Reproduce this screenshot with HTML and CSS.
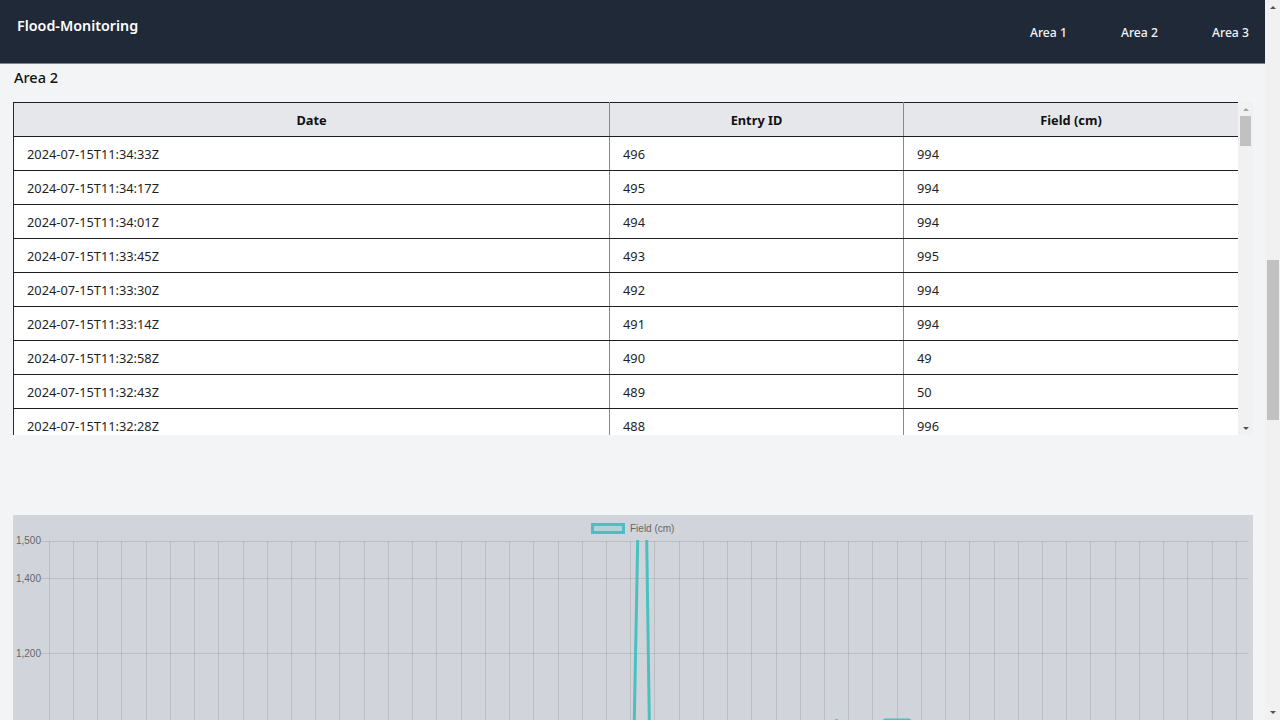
FILE: index.html
```html
<!DOCTYPE html>
<html lang="en">
<head>
<meta charset="utf-8">
<title>Flood-Monitoring</title>
<link rel="stylesheet" href="styles.css">
</head>
<body>
<div class="page">
  <header class="topbar">
    <div class="brand">Flood-Monitoring</div>
    <nav class="nav">
      <a href="#area1">Area 1</a>
      <a href="#area2">Area 2</a>
      <a href="#area3">Area 3</a>
    </nav>
  </header>
  <main class="content">
    <section class="area" id="area2">
      <h2 class="area-title">Area 2</h2>
      <div class="table-wrap">
        <div class="table-scroll">
          <table class="data">
            <colgroup><col class="col-date"><col class="col-id"><col class="col-field"></colgroup>
            <thead><tr><th>Date</th><th>Entry ID</th><th>Field (cm)</th></tr></thead>
            <tbody>
              <tr><td>2024-07-15T11:34:33Z</td><td>496</td><td>994</td></tr>
              <tr><td>2024-07-15T11:34:17Z</td><td>495</td><td>994</td></tr>
              <tr><td>2024-07-15T11:34:01Z</td><td>494</td><td>994</td></tr>
              <tr><td>2024-07-15T11:33:45Z</td><td>493</td><td>995</td></tr>
              <tr><td>2024-07-15T11:33:30Z</td><td>492</td><td>994</td></tr>
              <tr><td>2024-07-15T11:33:14Z</td><td>491</td><td>994</td></tr>
              <tr><td>2024-07-15T11:32:58Z</td><td>490</td><td>49</td></tr>
              <tr><td>2024-07-15T11:32:43Z</td><td>489</td><td>50</td></tr>
              <tr><td>2024-07-15T11:32:28Z</td><td>488</td><td>996</td></tr>
            </tbody>
          </table>
        </div>
        <div class="scrollbar table-bar">
          <span class="sb-btn"><i class="arrow-up dim"></i></span>
          <span class="sb-track"><span class="sb-thumb table-thumb"></span></span>
          <span class="sb-btn"><i class="arrow-down"></i></span>
        </div>
      </div>
      <div class="chart-box">
        <svg class="chart" width="1240" height="620" viewBox="0 0 1240 620" xmlns="http://www.w3.org/2000/svg">
          <defs>
            <clipPath id="plot"><rect x="36" y="25" width="1201" height="565"/></clipPath>
          </defs>
          <g class="legend">
            <rect x="579.5" y="9.5" width="31" height="8" fill="rgba(75,192,192,0.2)" stroke="rgb(75,192,192)" stroke-width="3"/>
            <text x="617" y="17" class="legend-text">Field (cm)</text>
          </g>
          <path class="grid" d="M28 26.5H1235.5M28 63.5H1235.5M28 138.5H1235.5M28 213.5H1235.5M28 288.5H1235.5M28 363.5H1235.5M28 438.5H1235.5M28 513.5H1235.5M28 588.5H1235.5"/>
          <path class="grid" d="M36.5 26V596M60.5 26V596M84.5 26V596M108.5 26V596M133.5 26V596M157.5 26V596M181.5 26V596M205.5 26V596M230.5 26V596M254.5 26V596M278.5 26V596M302.5 26V596M326.5 26V596M351.5 26V596M375.5 26V596M399.5 26V596M423.5 26V596M448.5 26V596M472.5 26V596M496.5 26V596M520.5 26V596M545.5 26V596M569.5 26V596M593.5 26V596M617.5 26V596M641.5 26V596M666.5 26V596M690.5 26V596M714.5 26V596M738.5 26V596M763.5 26V596M787.5 26V596M811.5 26V596M835.5 26V596M859.5 26V596M884.5 26V596M908.5 26V596M932.5 26V596M956.5 26V596M981.5 26V596M1005.5 26V596M1029.5 26V596M1053.5 26V596M1077.5 26V596M1102.5 26V596M1126.5 26V596M1150.5 26V596M1174.5 26V596M1199.5 26V596M1223.5 26V596"/>
          <g class="ticks">
            <text x="28" y="26.5">1,500</text>
            <text x="28" y="64">1,400</text>
            <text x="28" y="139">1,200</text>
          </g>
          <path class="series" clip-path="url(#plot)" d="M36.3 216L605.56 216L617.68 395.6L629.79 -242.5L641.9 590L654.01 216L811.47 216L823.58 205.5L835.69 216L859.92 216L872.03 205L884.14 205L896.25 205L908.36 216L1235.39 216"/>
        </svg>
      </div>
    </section>
  </main>
</div>
<div class="scrollbar page-bar">
  <span class="sb-btn"><i class="arrow-up"></i></span>
  <span class="sb-track"><span class="sb-thumb page-thumb"></span></span>
  <span class="sb-btn"><i class="arrow-down"></i></span>
</div>
</body>
</html>
```
FILE: styles.css
```css
* { box-sizing: border-box; }

html { background: #f3f4f6; }

body {
  margin: 0;
  height: 100vh;
  overflow: hidden;
  display: flex;
  background: #f3f4f6;
  color: #111827;
  font-family: "Noto Sans", "Open Sans", sans-serif;
}

.page {
  flex: 1;
  min-width: 0;
  height: 100%;
  overflow: hidden;
  display: flex;
  flex-direction: column;
}

/* ---------- header ---------- */
.topbar {
  flex: none;
  height: 64px;
  display: flex;
  justify-content: space-between;
  align-items: flex-start;
  padding: 0 16px 0 17px;
  background: #1f2937;
  border-bottom: 1px solid #7b8494;
}

.brand {
  padding-top: 16px;
  font-size: 14.3px;
  line-height: 20px;
  font-weight: 600;
  color: #ffffff;
}

.nav {
  display: flex;
  gap: 54px;
  padding-top: 23px;
}

.nav a {
  color: #f3f4f6;
  text-decoration: none;
  font-size: 12.2px;
  line-height: 20px;
  font-weight: 500;
}

/* ---------- content ---------- */
.content {
  padding: 0 12px 0 13px;
}

.area-title {
  margin: 0 0 12px;
  padding-left: 1px;
  font-size: 14.5px;
  line-height: 26px;
  font-weight: 500;
  color: #111111;
}

.table-wrap {
  height: 333px;
  display: flex;
}

.table-scroll {
  flex: 1;
  min-width: 0;
  overflow: hidden;
}

.data {
  width: 100%;
  border-collapse: collapse;
  table-layout: fixed;
  background: #ffffff;
  font-size: 12.8px;
  color: #1f1f1f;
}

.col-date { width: 596px; }
.col-id { width: 294px; }
.col-field { width: 335px; }

.data th,
.data td {
  height: 34px;
  padding: 0 13px;
  border: 1px solid #8a8a8a;
  border-top-color: #1f1f1f;
  border-bottom-color: #1f1f1f;
  text-align: left;
  white-space: nowrap;
}

.data th {
  background: #e5e7eb;
  font-weight: 700;
  text-align: center;
  color: #111111;
}

.data th:first-child,
.data td:first-child { border-left-color: #2a2a2a; }

.data th:last-child,
.data td:last-child { border-right-color: #1f1f1f; }

/* ---------- scrollbars ---------- */
.scrollbar {
  flex: none;
  width: 15px;
  display: flex;
  flex-direction: column;
  background: #f1f1f1;
}

.sb-btn {
  flex: none;
  height: 15px;
  display: flex;
  align-items: center;
  justify-content: center;
}

.table-bar .sb-btn { height: 14px; }

.sb-track {
  flex: 1;
  display: flex;
  flex-direction: column;
  align-items: center;
}

.sb-thumb {
  display: block;
  width: 11px;
  background: #c1c1c1;
}

.table-thumb { height: 30px; }

.page-thumb {
  margin-top: 245px;
  height: 160px;
  width: 12px;
  margin-left: 1px;
}

.arrow-up,
.arrow-down {
  display: block;
  width: 0;
  height: 0;
  border-left: 3.5px solid transparent;
  border-right: 3.5px solid transparent;
}

.arrow-up { border-bottom: 3.5px solid #505050; }
.arrow-down { border-top: 3.5px solid #505050; }
.arrow-up.dim { border-bottom-color: #a3a3a3; }

/* ---------- chart ---------- */
.chart-box {
  margin-top: 80px;
  height: 620px;
  background: #d1d5db;
  overflow: hidden;
}

.chart { display: block; }

.chart .grid {
  fill: none;
  stroke: rgba(0, 0, 0, 0.1);
  stroke-width: 1;
}

.chart .ticks text {
  font-family: "Liberation Sans", Arial, sans-serif;
  font-size: 10px;
  fill: #666666;
  text-anchor: end;
  dominant-baseline: middle;
}

.chart .legend-text {
  font-family: "Liberation Sans", Arial, sans-serif;
  font-size: 10px;
  fill: #666666;
}

.chart .series {
  fill: none;
  stroke: rgb(75, 192, 192);
  stroke-width: 3;
  stroke-linejoin: round;
}
```
